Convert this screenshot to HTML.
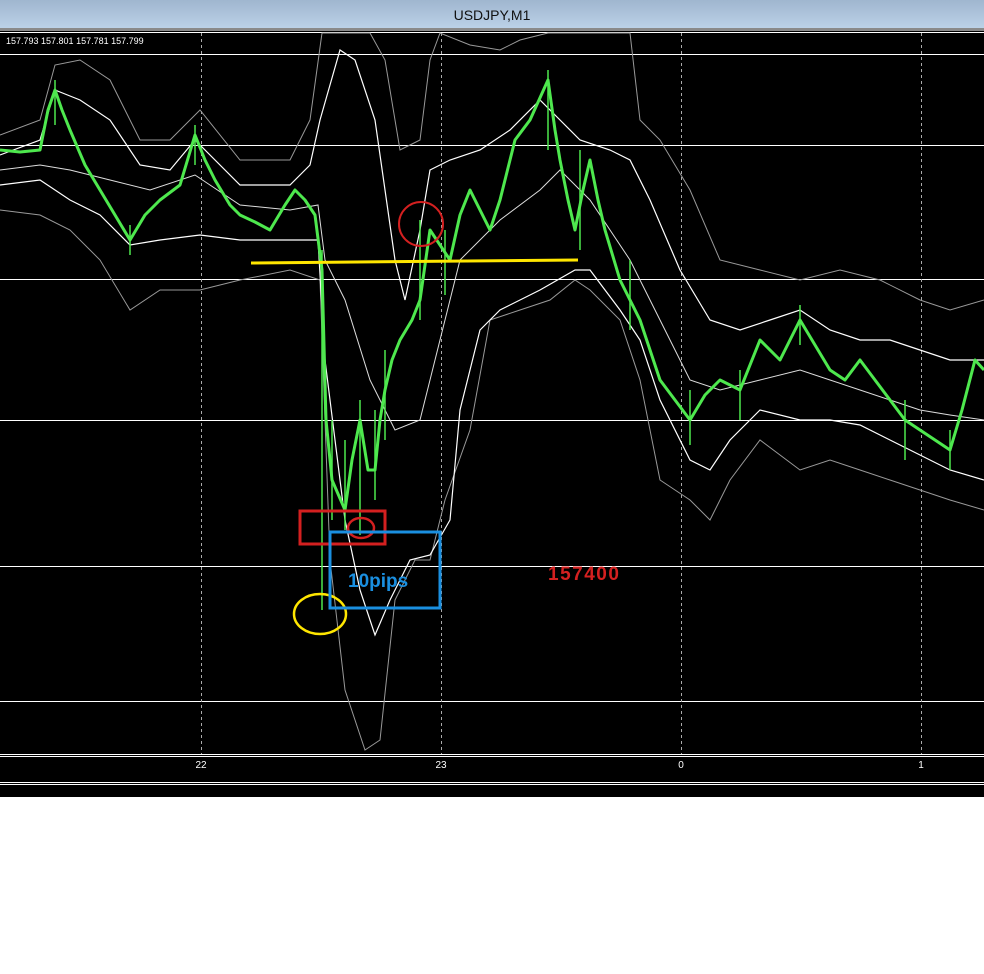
<!DOCTYPE html>
<html><head><style>
html,body{margin:0;padding:0;width:984px;height:974px;background:#fff;overflow:hidden;font-family:"Liberation Sans",sans-serif}
#title{position:absolute;left:0;top:0;width:984px;height:29px;background:linear-gradient(#9fb6cf,#bcd2e8);text-align:center;font-size:14px;line-height:30px;color:#111}
#gl{position:absolute;left:0;top:28px;width:984px;height:3px;background:#8a8a8a}
svg{position:absolute;left:0;top:31px}
</style></head><body>
<div id="title">USDJPY,M1</div><div id="gl"></div>
<svg width="984" height="766" viewBox="0 31 984 766">
<rect x="0" y="31" width="984" height="766" fill="#000"/>
<g stroke="#fff" stroke-width="1">
<line x1="0" y1="32.5" x2="984" y2="32.5"/>
<line x1="0" y1="54.5" x2="984" y2="54.5"/>
<line x1="0" y1="145.5" x2="984" y2="145.5"/>
<line x1="0" y1="279.5" x2="984" y2="279.5"/>
<line x1="0" y1="420.5" x2="984" y2="420.5"/>
<line x1="0" y1="566.5" x2="984" y2="566.5"/>
<line x1="0" y1="701.5" x2="984" y2="701.5"/>
<line x1="0" y1="754.5" x2="984" y2="754.5"/>
<line x1="0" y1="756.5" x2="984" y2="756.5"/>
<line x1="0" y1="782.5" x2="984" y2="782.5"/>
<line x1="0" y1="784.5" x2="984" y2="784.5"/>
</g>
<g stroke="#aaa" stroke-dasharray="3,3">
<line x1="201.5" y1="33" x2="201.5" y2="754"/>
<line x1="441.5" y1="33" x2="441.5" y2="754"/>
<line x1="681.5" y1="33" x2="681.5" y2="754"/>
<line x1="921.5" y1="33" x2="921.5" y2="754"/>
</g>
<g fill="none" stroke="#999" stroke-width="1">
<polyline points="0,135 40,120 55,65 80,60 110,80 140,140 170,140 200,110 240,160 290,160 310,120 322,33 345,33 370,33 385,60 400,150 420,140 430,60 440,33 470,45 500,50 520,40 548,33 600,33 630,33 640,120 660,140 690,190 720,260 760,270 800,280 840,270 880,280 920,300 950,310 984,300"/>
<polyline points="0,210 40,215 70,230 100,260 130,310 160,290 200,290 240,280 290,270 320,280 330,560 345,690 365,750 380,740 395,600 415,560 430,560 445,500 470,430 490,320 520,310 550,300 575,280 590,290 620,320 640,380 660,480 690,500 710,520 730,480 760,440 800,470 830,460 860,470 890,480 920,490 950,500 984,510"/>
</g>
<g fill="none" stroke="#fff" stroke-width="1.2">
<polyline points="0,155 40,140 55,90 80,100 110,120 140,165 170,170 195,140 240,185 290,185 310,165 320,120 340,50 355,60 375,120 395,260 405,300 420,230 430,170 450,160 480,150 510,130 540,100 560,120 580,140 610,150 630,160 650,200 680,270 710,320 740,330 770,320 800,310 830,330 860,340 890,340 920,350 950,360 984,360"/>
<polyline points="0,185 40,180 70,200 100,215 130,245 160,240 200,235 240,240 290,240 318,240 325,360 345,520 360,590 375,635 390,600 410,560 430,555 450,520 460,410 480,330 500,310 540,290 575,270 590,270 620,310 640,340 660,400 690,460 710,470 730,440 760,410 800,420 830,420 860,425 890,440 920,455 950,470 984,480"/>
<polyline stroke="#ddd" stroke-width="1" points="0,170 40,165 70,170 110,180 150,190 195,175 240,205 290,210 318,205 325,260 345,300 370,380 395,430 420,420 440,340 460,260 500,220 540,190 560,170 590,200 630,260 660,320 690,380 720,390 760,380 800,370 830,380 860,390 890,400 920,410 950,415 984,420"/>
</g>
<polyline fill="none" stroke="#4ee84e" stroke-width="3" stroke-linejoin="round" points="0,150 20,152 40,150 48,110 55,90 62,110 70,130 85,165 100,190 115,215 130,240 145,215 160,200 180,185 195,135 205,160 215,180 230,205 240,215 255,222 270,230 285,205 295,190 305,200 315,215 322,270 326,420 332,480 345,510 352,460 360,420 368,470 375,470 380,420 385,390 392,360 400,340 412,320 420,300 430,230 440,245 450,260 460,215 470,190 480,210 490,230 500,200 515,140 530,120 548,80 555,130 560,160 568,200 575,230 583,190 590,160 598,200 605,230 620,280 630,300 640,320 650,350 660,380 675,400 690,420 705,395 720,380 740,390 760,340 780,360 800,320 815,345 830,370 845,380 860,360 875,380 890,400 905,420 920,430 935,440 950,450 962,410 975,360 984,370"/>
<g stroke="#4ee84e" stroke-width="1.5">
<line x1="55" y1="80" x2="55" y2="125"/><line x1="130" y1="225" x2="130" y2="255"/><line x1="195" y1="125" x2="195" y2="165"/>
<line x1="322" y1="250" x2="322" y2="610"/><line x1="332" y1="420" x2="332" y2="520"/><line x1="345" y1="440" x2="345" y2="530"/>
<line x1="360" y1="400" x2="360" y2="535"/><line x1="375" y1="410" x2="375" y2="500"/><line x1="385" y1="350" x2="385" y2="440"/>
<line x1="420" y1="220" x2="420" y2="320"/><line x1="445" y1="230" x2="445" y2="295"/><line x1="548" y1="70" x2="548" y2="150"/>
<line x1="580" y1="150" x2="580" y2="250"/><line x1="630" y1="260" x2="630" y2="330"/><line x1="690" y1="390" x2="690" y2="445"/>
<line x1="740" y1="370" x2="740" y2="420"/><line x1="800" y1="305" x2="800" y2="345"/><line x1="905" y1="400" x2="905" y2="460"/><line x1="950" y1="430" x2="950" y2="470"/>
</g>
<line x1="251" y1="263" x2="578" y2="260" stroke="#ffe600" stroke-width="3"/>
<ellipse cx="320" cy="614" rx="26" ry="20" fill="none" stroke="#ffe600" stroke-width="2.5"/>
<circle cx="421" cy="224" r="22" fill="none" stroke="#d42020" stroke-width="2"/>
<rect x="300" y="511" width="85" height="33" fill="none" stroke="#d42020" stroke-width="3"/>
<ellipse cx="361" cy="528" rx="13" ry="10" fill="none" stroke="#d42020" stroke-width="2.5"/>
<rect x="330" y="532" width="110" height="76" fill="none" stroke="#1a8fe0" stroke-width="3"/>
<text x="348" y="587" fill="#1a8fe0" font-size="19" font-weight="bold" font-family="Liberation Sans,sans-serif">10pips</text>
<text x="548" y="580" fill="#d42020" font-size="19" font-weight="bold" letter-spacing="1.5" font-family="Liberation Sans,sans-serif">157400</text>
<text x="6" y="44" fill="#fff" font-size="9" font-family="Liberation Sans,sans-serif">157.793 157.801 157.781 157.799</text>
<g fill="#fff" font-size="10" font-family="Liberation Sans,sans-serif" text-anchor="middle">
<text x="201" y="768">22</text><text x="441" y="768">23</text><text x="681" y="768">0</text><text x="921" y="768">1</text>
</g>
</svg>
</body></html>
